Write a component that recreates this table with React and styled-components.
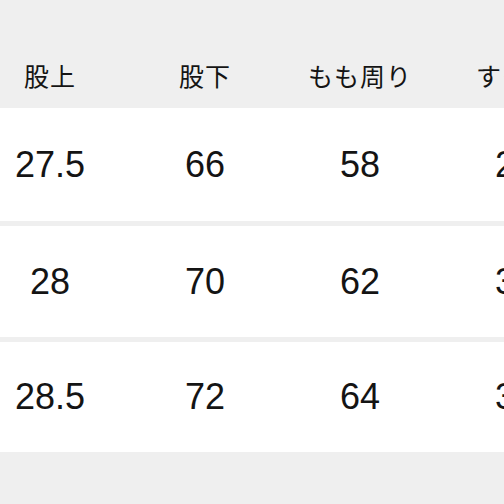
import styled, { createGlobalStyle } from "styled-components";

const GlobalStyle = createGlobalStyle`
  html, body {
    margin: 0;
    padding: 0;
    background: #efefef;
  }
  body {
    width: 504px;
    height: 504px;
    overflow: hidden;
    font-family: "Liberation Sans", "Noto Sans CJK JP", sans-serif;
    color: #141414;
  }
`;

const StyledTable = styled.div`
  display: flex;
  flex-direction: column;
  gap: 5px;
  width: 504px;
  overflow: hidden;
`;

const StyledRow = styled.div`
  display: grid;
  grid-template-columns: repeat(4, 155px);
  margin-left: -27.5px;
  height: ${(props) => props.height}px;
  align-items: center;
  background: ${(props) => (props.header ? "#efefef" : "#ffffff")};
`;

const StyledHeaderRow = styled(StyledRow)`
  align-items: end;
  padding-bottom: 15px;
  box-sizing: border-box;
`;

const StyledHeaderCell = styled.div`
  text-align: center;
  white-space: nowrap;
  font-family: "Noto Sans CJK JP", "Liberation Sans", sans-serif;
  font-size: 25px;
  line-height: 26px;
  letter-spacing: 1px;
`;

const StyledValueCell = styled.div`
  text-align: center;
  white-space: nowrap;
  font-size: 36px;
  line-height: 40px;
`;

const HEADERS = ["股上", "股下", "もも周り", "すそ幅"];

const SIZES = [
  { id: 1, values: ["27.5", "66", "58", "21"], height: 113 },
  { id: 2, values: ["28", "70", "62", "30"], height: 111 },
  { id: 3, values: ["28.5", "72", "64", "31"], height: 110 },
];

export default function App() {
  return (
    <>
      <GlobalStyle />
      <StyledTable>
        <StyledHeaderRow header height={103}>
          {HEADERS.map((label) => (
            <StyledHeaderCell key={label}>{label}</StyledHeaderCell>
          ))}
        </StyledHeaderRow>
        {SIZES.map((size) => (
          <StyledRow key={size.id} height={size.height}>
            {size.values.map((value, i) => (
              <StyledValueCell key={i}>{value}</StyledValueCell>
            ))}
          </StyledRow>
        ))}
      </StyledTable>
    </>
  );
}
